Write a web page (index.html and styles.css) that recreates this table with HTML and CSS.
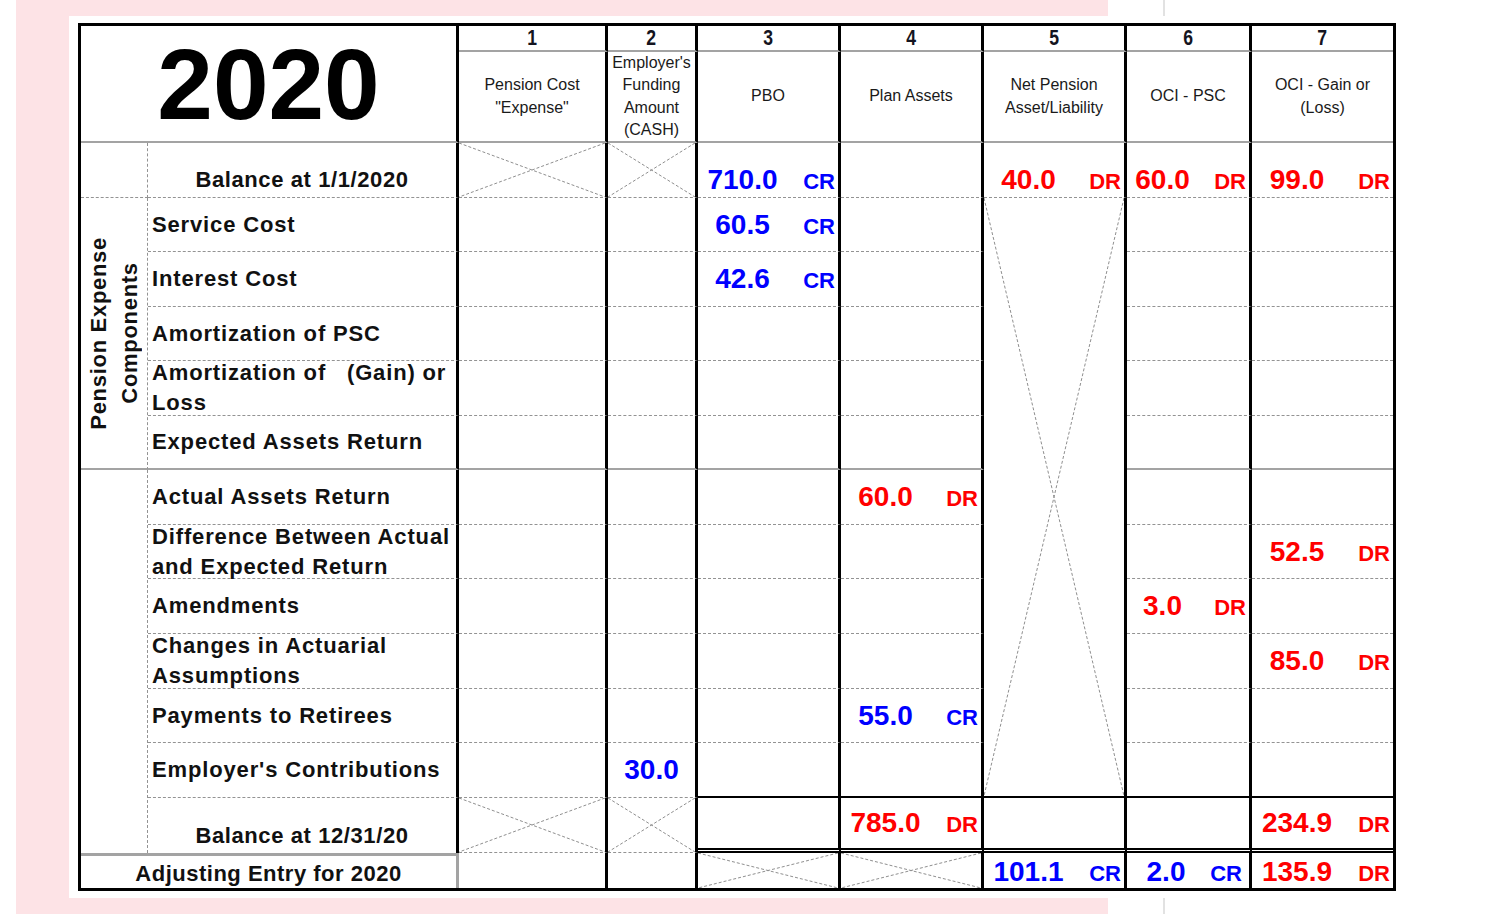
FILE: index.html
```html
<!DOCTYPE html>
<html lang="en">
<head>
    <meta charset="UTF-8">
    <title>Pension Worksheet 2020</title>
    <link rel="stylesheet" href="styles.css">
</head>
<body>
    <div class="backdrop">
        <div class="sheet-wrap">
            <div class="sheet">
                <!-- header -->
                <div class="c yr">2020</div>
                <div class="c hn"><span>1</span></div>
                <div class="c hn"><span>2</span></div>
                <div class="c hn"><span>3</span></div>
                <div class="c hn"><span>4</span></div>
                <div class="c hn"><span>5</span></div>
                <div class="c hn"><span>6</span></div>
                <div class="c hn e"><span>7</span></div>
                <div class="c hl">Pension Cost<br>"Expense"</div>
                <div class="c hl">Employer's<br>Funding<br>Amount<br>(CASH)</div>
                <div class="c hl">PBO</div>
                <div class="c hl">Plan Assets</div>
                <div class="c hl">Net Pension<br>Asset/Liability</div>
                <div class="c hl">OCI - PSC</div>
                <div class="c hl e">OCI - Gain or<br>(Loss)</div>

                <!-- opening balance -->
                <div class="c side"></div>
                <div class="c lbl bal">Balance at 1/1/2020</div>
                <div class="c x"><svg viewBox="0 0 100 100" preserveAspectRatio="none"><line x1="0" y1="0" x2="100" y2="100" vector-effect="non-scaling-stroke"/><line x1="100" y1="0" x2="0" y2="100" vector-effect="non-scaling-stroke"/></svg></div>
                <div class="c x"><svg viewBox="0 0 100 100" preserveAspectRatio="none"><line x1="0" y1="0" x2="100" y2="100" vector-effect="non-scaling-stroke"/><line x1="100" y1="0" x2="0" y2="100" vector-effect="non-scaling-stroke"/></svg></div>
                <div class="c amt low"><span class="v cr">710.0</span><span class="t cr">CR</span></div>
                <div class="c"></div>
                <div class="c amt low"><span class="v dr">40.0</span><span class="t dr">DR</span></div>
                <div class="c amt low"><span class="v dr">60.0</span><span class="t dr">DR</span></div>
                <div class="c amt low e"><span class="v dr">99.0</span><span class="t dr">DR</span></div>

                <!-- pension expense components -->
                <div class="c side pec grp"><span>Pension Expense<br>Components</span></div>
                <div class="c lbl">Service Cost</div>
                <div class="c"></div>
                <div class="c"></div>
                <div class="c amt"><span class="v cr">60.5</span><span class="t cr">CR</span></div>
                <div class="c"></div>
                <div class="c big-x"><svg viewBox="0 0 100 100" preserveAspectRatio="none"><line x1="0" y1="0" x2="100" y2="100" vector-effect="non-scaling-stroke"/><line x1="100" y1="0" x2="0" y2="100" vector-effect="non-scaling-stroke"/></svg></div>
                <div class="c"></div>
                <div class="c e"></div>

                <div class="c lbl">Interest Cost</div>
                <div class="c"></div>
                <div class="c"></div>
                <div class="c amt"><span class="v cr">42.6</span><span class="t cr">CR</span></div>
                <div class="c"></div>
                <div class="c"></div>
                <div class="c e"></div>

                <div class="c lbl">Amortization of PSC</div>
                <div class="c"></div>
                <div class="c"></div>
                <div class="c"></div>
                <div class="c"></div>
                <div class="c"></div>
                <div class="c e"></div>

                <div class="c lbl">Amortization of &nbsp; (Gain) or<br>Loss</div>
                <div class="c"></div>
                <div class="c"></div>
                <div class="c"></div>
                <div class="c"></div>
                <div class="c"></div>
                <div class="c e"></div>

                <div class="c lbl grp">Expected Assets Return</div>
                <div class="c grp"></div>
                <div class="c grp"></div>
                <div class="c grp"></div>
                <div class="c grp"></div>
                <div class="c grp"></div>
                <div class="c grp e"></div>

                <!-- other changes -->
                <div class="c side rest"></div>
                <div class="c lbl">Actual Assets Return</div>
                <div class="c"></div>
                <div class="c"></div>
                <div class="c"></div>
                <div class="c amt"><span class="v dr">60.0</span><span class="t dr">DR</span></div>
                <div class="c"></div>
                <div class="c e"></div>

                <div class="c lbl">Difference Between Actual<br>and Expected Return</div>
                <div class="c"></div>
                <div class="c"></div>
                <div class="c"></div>
                <div class="c"></div>
                <div class="c"></div>
                <div class="c amt e"><span class="v dr">52.5</span><span class="t dr">DR</span></div>

                <div class="c lbl">Amendments</div>
                <div class="c"></div>
                <div class="c"></div>
                <div class="c"></div>
                <div class="c"></div>
                <div class="c amt"><span class="v dr">3.0</span><span class="t dr">DR</span></div>
                <div class="c e"></div>

                <div class="c lbl">Changes in Actuarial<br>Assumptions</div>
                <div class="c"></div>
                <div class="c"></div>
                <div class="c"></div>
                <div class="c"></div>
                <div class="c"></div>
                <div class="c amt e"><span class="v dr">85.0</span><span class="t dr">DR</span></div>

                <div class="c lbl">Payments to Retirees</div>
                <div class="c"></div>
                <div class="c"></div>
                <div class="c"></div>
                <div class="c amt"><span class="v cr">55.0</span><span class="t cr">CR</span></div>
                <div class="c"></div>
                <div class="c e"></div>

                <div class="c lbl">Employer's Contributions</div>
                <div class="c"></div>
                <div class="c solo"><span class="v cr">30.0</span></div>
                <div class="c sb"></div>
                <div class="c sb"></div>
                <div class="c sb"></div>
                <div class="c sb e"></div>

                <!-- closing balance -->
                <div class="c lbl bal close">Balance at 12/31/20</div>
                <div class="c x"><svg viewBox="0 0 100 100" preserveAspectRatio="none"><line x1="0" y1="0" x2="100" y2="100" vector-effect="non-scaling-stroke"/><line x1="100" y1="0" x2="0" y2="100" vector-effect="non-scaling-stroke"/></svg></div>
                <div class="c x"><svg viewBox="0 0 100 100" preserveAspectRatio="none"><line x1="0" y1="0" x2="100" y2="100" vector-effect="non-scaling-stroke"/><line x1="100" y1="0" x2="0" y2="100" vector-effect="non-scaling-stroke"/></svg></div>
                <div class="c db"></div>
                <div class="c amt db"><span class="v dr">785.0</span><span class="t dr">DR</span></div>
                <div class="c db"></div>
                <div class="c db"></div>
                <div class="c amt db e"><span class="v dr">234.9</span><span class="t dr">DR</span></div>

                <!-- adjusting entry -->
                <div class="c adj">Adjusting Entry for 2020</div>
                <div class="c last"></div>
                <div class="c last"></div>
                <div class="c x last"><svg viewBox="0 0 100 100" preserveAspectRatio="none"><line x1="0" y1="0" x2="100" y2="100" vector-effect="non-scaling-stroke"/><line x1="100" y1="0" x2="0" y2="100" vector-effect="non-scaling-stroke"/></svg></div>
                <div class="c x last"><svg viewBox="0 0 100 100" preserveAspectRatio="none"><line x1="0" y1="0" x2="100" y2="100" vector-effect="non-scaling-stroke"/><line x1="100" y1="0" x2="0" y2="100" vector-effect="non-scaling-stroke"/></svg></div>
                <div class="c amt last adj-amt"><span class="v cr">101.1</span><span class="t cr">CR</span></div>
                <div class="c amt last adj-amt shift"><span class="v cr">2.0</span><span class="t cr">CR</span></div>
                <div class="c amt last adj-amt e"><span class="v dr">135.9</span><span class="t dr">DR</span></div>
            </div>
        </div>
    </div>
</body>
</html>
```

FILE: styles.css
```css
body {
    margin: 0;
    font-family: 'Liberation Sans', Arial, sans-serif;
    color: #111;
    background-color: #fff;
    background-image: linear-gradient(to right, transparent 1163px, #e2e2e2 1163px, #e2e2e2 1165px, transparent 1165px);
}

.backdrop {
    width: 1092px;
    min-height: 914px;
    margin-left: 16px;
    padding-top: 16px;
    box-sizing: border-box;
    background-color: #fde3e6;
}

.sheet-wrap {
    width: 1336px;
    margin-left: 53px;
    padding: 7px 9px;
    box-sizing: border-box;
    background-color: #fff;
}

.sheet {
    display: grid;
    grid-template-columns: 67px 311px 149px 90px 143px 143px 143px 125px 141px;
    grid-template-rows: 26px 91px 55px 54px 55px 54px 55px 54px 55px 54px 55px 55px 54px 55px 55px 35px;
    border: 3px solid #000;
    background-color: #fff;
}

/* cells */
.c {
    position: relative;
    box-sizing: border-box;
    border-right: 3px solid #000;
    border-bottom: 1px dashed #939393;
    min-width: 0;
}

.c.e {
    border-right: none;
}

.yr {
    grid-column: span 2;
    grid-row: span 2;
    display: flex;
    align-items: center;
    justify-content: center;
    font-size: 100px;
    font-weight: bold;
    line-height: 1;
    color: #000;
    border-bottom: 2px solid #a3a3a3;
}

.hn {
    display: flex;
    align-items: center;
    justify-content: center;
    font-size: 22px;
    font-weight: bold;
    line-height: 1;
    color: #141420;
    border-bottom: 2px solid #a3a3a3;
}

.hn span {
    display: inline-block;
    transform: scaleX(0.8);
}

.hl {
    display: flex;
    align-items: center;
    justify-content: center;
    text-align: center;
    font-size: 16px;
    line-height: 22.5px;
    color: #1a1a1a;
    border-bottom: 2px solid #a3a3a3;
}

.side {
    border-right: 1px dashed #939393;
}

.pec {
    grid-row: span 5;
    display: flex;
    align-items: center;
    justify-content: center;
}

.pec span {
    writing-mode: vertical-rl;
    transform: rotate(180deg);
    text-align: center;
    font-size: 22px;
    font-weight: bold;
    letter-spacing: 0.7px;
    line-height: 31px;
    white-space: nowrap;
}

.rest {
    grid-row: span 7;
    border-bottom: none;
}

.lbl {
    display: flex;
    align-items: center;
    padding-left: 4px;
    font-size: 22px;
    font-weight: bold;
    letter-spacing: 0.85px;
    line-height: 30px;
    white-space: nowrap;
}

.lbl.bal {
    justify-content: center;
    align-items: flex-end;
    padding-left: 0;
    padding-bottom: 2px;
    letter-spacing: 0.6px;
}

.lbl.close {
    border-bottom: none;
}

.grp {
    border-bottom: 2px solid #a3a3a3;
}

.sb {
    border-bottom: 2px solid #000;
}

.db {
    border-bottom: 5px double #000;
}

.last {
    border-bottom: none;
}

.adj {
    grid-column: span 2;
    display: flex;
    align-items: center;
    justify-content: center;
    padding-top: 3px;
    font-size: 22px;
    font-weight: bold;
    letter-spacing: 0.5px;
    white-space: nowrap;
    border-top: 3px solid #a3a3a3;
    border-right: 3px solid #a3a3a3;
    border-bottom: none;
}

/* crossed-out cells */
.x svg,
.big-x svg {
    position: absolute;
    inset: 0;
    width: 100%;
    height: 100%;
}

.x line,
.big-x line {
    stroke: #8f8f8f;
    stroke-width: 1;
    stroke-dasharray: 3 2;
}

.big-x {
    grid-row: span 11;
    border-bottom: 2px solid #000;
}

/* amounts */
.amt {
    display: grid;
    grid-template-columns: 1fr 51px;
    align-content: center;
    align-items: baseline;
}

.amt.low {
    align-content: end;
    padding-bottom: 1px;
}

.adj-amt {
    padding-top: 2px;
}

.amt.shift {
    grid-template-columns: 1fr 40px;
    padding-right: 4px;
}

.v {
    text-align: center;
    font-size: 28px;
    font-weight: bold;
}

.t {
    text-align: right;
    padding-right: 3px;
    font-size: 22px;
    font-weight: bold;
}

.solo {
    display: flex;
    align-items: center;
    justify-content: center;
}

.cr {
    color: #0000ff;
}

.dr {
    color: #ff0000;
}
```
